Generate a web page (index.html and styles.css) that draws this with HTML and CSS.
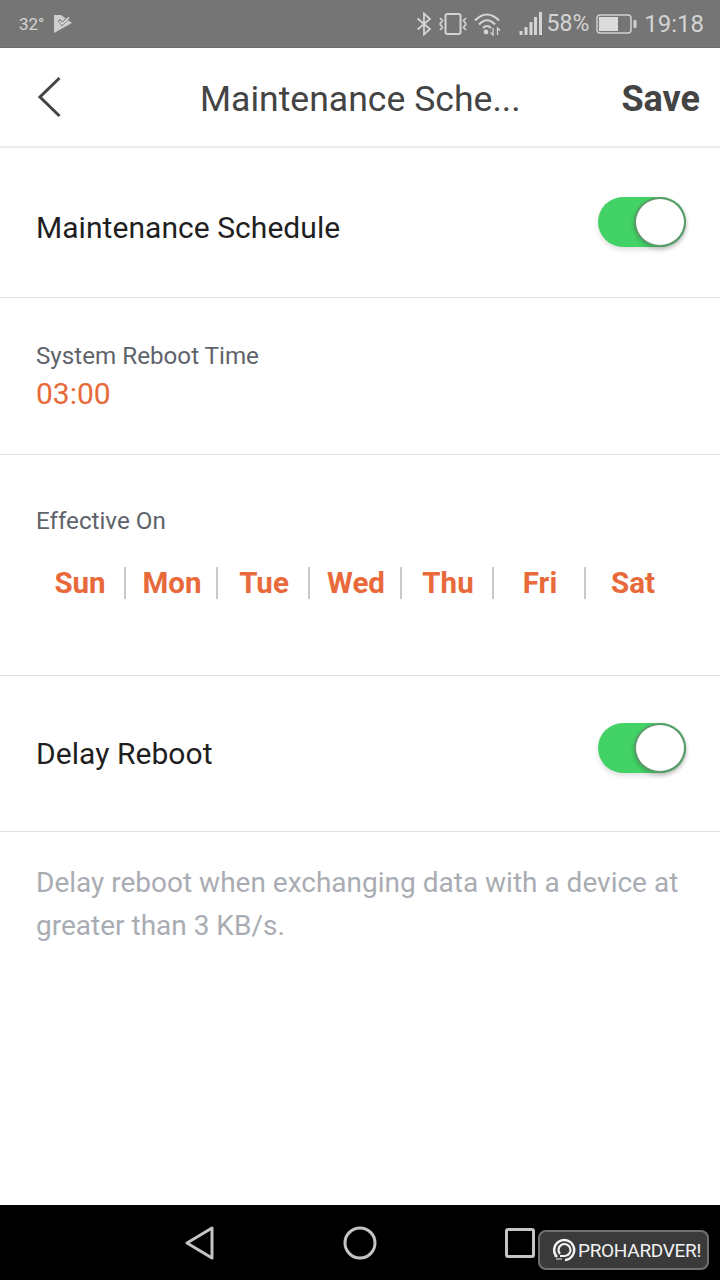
FILE: index.html
```html
<!DOCTYPE html>
<html lang="en">
<head>
    <meta charset="UTF-8">
    <meta name="viewport" content="width=device-width, initial-scale=1.0">
    <title>Maintenance Schedule</title>
    <link rel="stylesheet" href="styles.css">
</head>
<body>
    <div class="phone">
        <!-- Status bar -->
        <div class="status-bar">
            <div class="status-left">
                <span class="temp">32°</span>
                <svg class="play-icon" width="20" height="20" viewBox="0 0 20 20">
                    <path d="M1 1 H8 L19 9 L1 19 Z" fill="#cfcfcf"/>
                    <path d="M6 6 L9 10 L17 2" fill="none" stroke="#757575" stroke-width="3"/>
                    <path d="M6.500 7 L9 10 L16 3.500" fill="none" stroke="#e8e8e8" stroke-width="1.500"/>
                </svg>
            </div>
            <div class="status-right">
                <svg width="16" height="24" viewBox="0 0 16 24">
                    <path d="M1.500 6.500 L14 17 L8 22.500 V1.500 L14 7 L1.500 17.500" fill="none" stroke="#d4d4d4" stroke-width="1.800"/>
                </svg>
                <svg class="vibrate" width="28" height="24" viewBox="0 0 28 24">
                    <rect x="6.500" y="2" width="15" height="20" rx="2" fill="none" stroke="#d4d4d4" stroke-width="2"/>
                    <path d="M1 6 L3.500 8.500 L1 12 L3.500 15.500 L1 18 M27 6 L24.500 8.500 L27 12 L24.500 15.500 L27 18" fill="none" stroke="#d4d4d4" stroke-width="1.600"/>
                </svg>
                <svg class="wifi" width="28" height="24" viewBox="0 0 28 24">
                    <path d="M1 8.500 Q13 -3.500 25 8.500 M5 12.500 Q13 4 21 12.500 M9 16 Q13 12 17 16" fill="none" stroke="#d4d4d4" stroke-width="2.200"/>
                    <circle cx="12" cy="20" r="2.400" fill="#d4d4d4"/>
                    <path d="M19 16 V23 L16.500 20.500 M23.500 23 V16 L26 18.500" fill="none" stroke="#d4d4d4" stroke-width="1.300"/>
                </svg>
                <svg class="signal" width="24" height="24" viewBox="0 0 24 24">
                    <rect x="0.500" y="19" width="3" height="4" fill="#d4d4d4"/>
                    <rect x="5.500" y="15" width="3" height="8" fill="#d4d4d4"/>
                    <rect x="10.500" y="10" width="3" height="13" fill="#d4d4d4"/>
                    <rect x="15" y="5" width="3" height="18" fill="#d4d4d4"/>
                    <rect x="20" y="0" width="3" height="23" fill="#d4d4d4"/>
                </svg>
                <span class="percent">58%</span>
                <svg class="battery" width="41" height="22" viewBox="0 0 41 22">
                    <rect x="1" y="2" width="34" height="18" rx="3" fill="none" stroke="#cfcfcf" stroke-width="1.500"/>
                    <rect x="3" y="4" width="19" height="14" fill="#dcdcdc"/>
                    <rect x="37.500" y="7" width="3" height="8" rx="1" fill="#cfcfcf"/>
                </svg>
                <span class="clock">19:18</span>
            </div>
        </div>

        <!-- Header -->
        <div class="header">
            <svg class="back-icon" width="26" height="42" viewBox="0 0 26 42">
                <path d="M22.500 2 L3 21 L22.500 40" fill="none" stroke="#444" stroke-width="3"/>
            </svg>
            <div class="page-title">Maintenance Sche...</div>
            <div class="save">Save</div>
        </div>

        <div class="row row-schedule">
            <span class="row-label">Maintenance Schedule</span>
            <div class="switch"><div class="knob"></div></div>
        </div>

        <div class="time-block">
            <div class="small-label">System Reboot Time</div>
            <div class="time-value">03:00</div>
        </div>

        <div class="days-block">
            <div class="small-label">Effective On</div>
            <div class="days">
                <div class="day">Sun</div>
                <div class="day">Mon</div>
                <div class="day">Tue</div>
                <div class="day">Wed</div>
                <div class="day">Thu</div>
                <div class="day">Fri</div>
                <div class="day">Sat</div>
            </div>
        </div>

        <div class="row row-delay">
            <span class="row-label">Delay Reboot</span>
            <div class="switch"><div class="knob"></div></div>
        </div>

        <p class="note">Delay reboot when exchanging data with a device at greater than 3 KB/s.</p>

        <!-- Navigation bar -->
        <div class="nav-bar">
            <svg class="nav-back" width="30" height="34" viewBox="0 0 30 34">
                <path d="M27 2 V32 L2 17 Z" fill="none" stroke="#c4c4c4" stroke-width="3" stroke-linejoin="round"/>
            </svg>
            <svg class="nav-home" width="34" height="34" viewBox="0 0 34 34">
                <circle cx="17" cy="17" r="15" fill="none" stroke="#c4c4c4" stroke-width="3"/>
            </svg>
            <div class="nav-square"></div>
            <div class="badge">
                <svg width="24" height="24" viewBox="0 0 24 24">
                    <path d="M5 19 A10 10 0 1 1 13 22" fill="none" stroke="#f2f2f2" stroke-width="2.500"/>
                    <path d="M8 16 A6 6 0 1 1 13 18 H8" fill="none" stroke="#f2f2f2" stroke-width="2.200"/>
                    <path d="M1 15 H4 M2 18 H5 M4 21 H10" fill="none" stroke="#f2f2f2" stroke-width="1.200"/>
                </svg>
                <span class="badge-text">PROHARDVER!</span>
            </div>
        </div>
    </div>
</body>
</html>
```

FILE: styles.css
```css
* {
    box-sizing: border-box;
}

body {
    margin: 0;
    padding: 0;
    background-color: white;
    font-family: Roboto, "Liberation Sans", sans-serif;
}

.phone {
    width: 720px;
    height: 1280px;
    display: flex;
    flex-direction: column;
    position: relative;
    overflow: hidden;
}

.status-bar {
    height: 48px;
    padding: 0 16px 0 19px;
    background-color: #757575;
    border-bottom: 1px solid #6c6c6c;
    display: flex;
    justify-content: space-between;
    align-items: center;
    color: #d4d4d4;
}

.status-left {
    display: flex;
    align-items: center;
    gap: 9px;
}

.temp {
    font-size: 17px;
}

.status-right {
    display: flex;
    align-items: center;
}

.vibrate {
    margin-left: 7px;
}

.wifi {
    margin-left: 7px;
}

.signal {
    margin-left: 17px;
}

.percent {
    font-size: 23px;
    margin-left: 4px;
}

.battery {
    margin-left: 7px;
}

.clock {
    font-size: 24px;
    margin-left: 7px;
}

.header {
    height: 100px;
    flex-shrink: 0;
    border-bottom: 2px solid #ececec;
    padding: 0 20px 0 37px;
    display: flex;
    align-items: center;
    color: #444;
}

.page-title {
    margin-left: 137px;
    padding-top: 3px;
    font-size: 35.600px;
    flex: 1;
}

.save {
    padding-top: 3px;
    font-size: 36px;
    font-weight: bold;
}

.row {
    display: flex;
    justify-content: space-between;
    align-items: center;
    padding: 0 34px 0 36px;
    border-bottom: 1px solid #dfdfdf;
    flex-shrink: 0;
}

.row-schedule {
    height: 150px;
}

.row-schedule .row-label {
    margin-top: 10px;
}

.row-schedule .switch {
    margin-top: -2px;
}

.row-delay {
    height: 156px;
}

.row-delay .switch {
    margin-top: -11px;
}

.row-label {
    font-size: 30px;
    letter-spacing: 0.050px;
    color: #1f1f1f;
}

.switch {
    width: 88px;
    height: 50px;
    border-radius: 25px;
    background-color: #43d265;
    display: flex;
    justify-content: flex-end;
    align-items: center;
    box-shadow: 0 3px 5px rgba(0,0,0,0.12);
}

.knob {
    width: 52px;
    height: 50px;
    border-radius: 50%;
    background-color: white;
    border: 2px solid #5c9a6b;
    box-shadow: 0 2px 4px rgba(0,0,0,0.2);
}

.time-block {
    height: 157px;
    flex-shrink: 0;
    padding: 43px 36px 0;
    border-bottom: 1px solid #dfdfdf;
}

.small-label {
    font-size: 24.200px;
    line-height: 30px;
    color: #5f636b;
}

.time-value {
    font-size: 30px;
    line-height: 44px;
    margin-top: 1px;
    color: #e8693a;
}

.days-block {
    height: 221px;
    flex-shrink: 0;
    padding: 51px 34px 0 34px;
    border-bottom: 1px solid #dfdfdf;
}

.days-block .small-label {
    margin-left: 2px;
}

.days {
    display: flex;
    margin-top: 31px;
}

.day {
    width: 92px;
    height: 32px;
    padding-left: 2px;
    line-height: 32px;
    font-size: 29.500px;
    font-weight: bold;
    text-align: center;
    color: #e8693a;
    border-right: 2px solid #c9c9c9;
}

.day:last-child {
    border-right: none;
}

.note {
    margin: 29px 36px 0;
    font-size: 28px;
    line-height: 43px;
    color: #a9adb3;
}

.nav-bar {
    position: absolute;
    left: 0;
    bottom: 0;
    width: 720px;
    height: 75px;
    background-color: black;
    display: flex;
    align-items: center;
    padding: 1px 0 0 185px;
}

.nav-home {
    margin-left: 128px;
}

.nav-square {
    width: 30px;
    height: 30px;
    margin-left: 128px;
    margin-top: -1px;
    border: 3px solid #c4c4c4;
    border-radius: 3px;
}

/* watermark sits on top of the nav bar */
.badge {
    position: absolute;
    left: 538px;
    top: 25px;
    width: 171px;
    height: 40px;
    background-color: #3a3a3a;
    border: 2px solid #6f6f6f;
    border-radius: 8px;
    display: flex;
    align-items: center;
    padding-left: 12px;
    gap: 2px;
    color: #f2f2f2;
}

.badge-text {
    font-size: 19px;
    letter-spacing: -0.300px;
    white-space: nowrap;
}
```
